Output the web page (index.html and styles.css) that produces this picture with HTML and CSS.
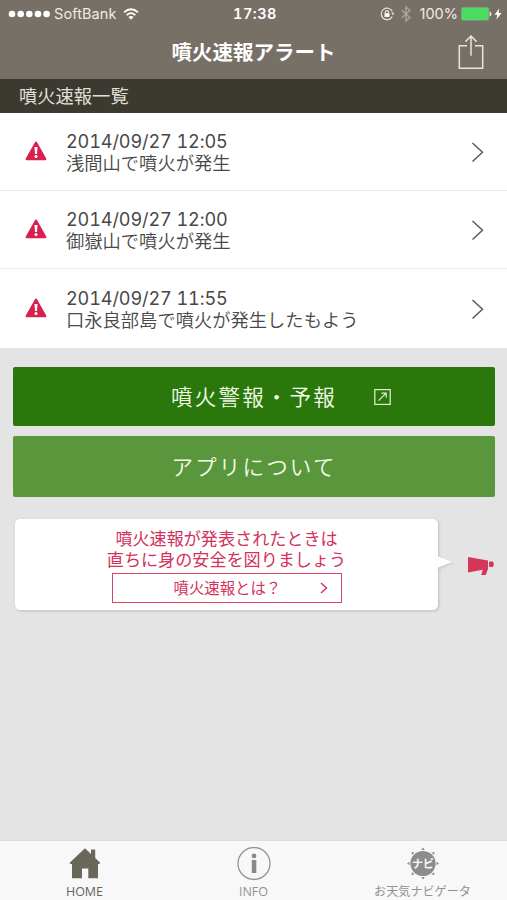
FILE: index.html
```html
<!DOCTYPE html>
<html lang="ja">
<head>
<meta charset="utf-8">
<title>噴火速報アラート</title>
<link rel="stylesheet" href="styles.css">
</head>
<body>
<div class="app">
  <header class="header">
    <div class="status">
      <div class="status-left">
        <svg width="42" height="10" viewBox="0 0 42 10" fill="#fff"><circle cx="4" cy="5" r="3.3"/><circle cx="12.7" cy="5" r="3.3"/><circle cx="21.3" cy="5" r="3.3"/><circle cx="30" cy="5" r="3.3"/><circle cx="38.6" cy="5" r="3.3"/></svg>
        <span class="carrier">SoftBank</span>
        <svg class="wifi" width="16" height="12" viewBox="0 0 16 12" fill="none" stroke="#fff" stroke-width="1.8"><path d="M1 4.4Q8-1.9 15 4.4M3.6 7.1Q8 3.2 12.4 7.1"/><path d="M5.4 9Q8 6.8 10.6 9L8 11.7Z" fill="#fff" stroke="none"/></svg>
      </div>
      <span class="clock">17:38</span>
      <div class="status-right">
        <svg width="15" height="14" viewBox="0 0 15 14" fill="none" stroke="#e9e6df" stroke-width="1.2"><path d="M12.3 4.4A5.8 5.8 0 1 0 12.3 9.4"/><path d="M11.3 5.8h3.2l-1.6 2.4z" fill="#e9e6df" stroke="none"/><rect x="4.5" y="6.2" width="5" height="3.7" fill="#fff" stroke="none"/><path d="M5.4 6.4V5.3a1.6 1.6 0 0 1 3.2 0v1.1"/></svg>
        <svg class="bluetooth" width="10" height="16" viewBox="0 0 10 16" fill="none" stroke="#aaa59c" stroke-width="1.4"><path d="M.8 4.2 9 11.5 5 15V1l4 3.5L.8 11.8"/></svg>
        <span class="percent">100%</span>
        <svg class="battery" width="31" height="14" viewBox="0 0 31 14"><rect x=".4" y=".5" width="27.4" height="12.8" rx="1.6" fill="#4cdc64" stroke="#8aa17e" stroke-width=".7"/><path d="M28.5 4.6q2 .3 2 2.4t-2 2.4z" fill="#e4e3dc"/></svg>
        <svg class="bolt" width="8" height="12" viewBox="0 0 8 12" fill="#fff"><path d="M5.3.5.5 6.8h2.8L2.4 11.5 7.5 5H4.6z"/></svg>
      </div>
    </div>
    <div class="titlebar">
      <h1>噴火速報アラート</h1>
      <svg class="share" width="26" height="36" viewBox="0 0 26 36" fill="none" stroke="#e9e5dc" stroke-width="1.5"><path d="M9 11.7H1.3V34.3h23.4V11.7H17M13 21.7V2.2M7.5 7.6 13 2l5.5 5.6"/></svg>
    </div>
  </header>

  <h2 class="section">噴火速報一覧</h2>

  <ul class="alerts">
    <li class="alert">
      <svg class="warn" viewBox="0 0 22 20"><path d="M11 1.8 20.2 18H1.8Z" fill="#d9204e" stroke="#d9204e" stroke-width="2.4" stroke-linejoin="round"/><path d="M9.5 6h3l-.5 7h-2z" fill="#fff"/><circle cx="11" cy="15.6" r="1.5" fill="#fff"/></svg>
      <div class="text"><time>2014/09/27 12:05</time><p>浅間山で噴火が発生</p></div>
      <svg class="arrow" viewBox="0 0 12 20"><path d="M1 1 11 10.2 1 19.4"/></svg>
    </li>
    <li class="alert">
      <svg class="warn" viewBox="0 0 22 20"><path d="M11 1.8 20.2 18H1.8Z" fill="#d9204e" stroke="#d9204e" stroke-width="2.4" stroke-linejoin="round"/><path d="M9.5 6h3l-.5 7h-2z" fill="#fff"/><circle cx="11" cy="15.6" r="1.5" fill="#fff"/></svg>
      <div class="text"><time>2014/09/27 12:00</time><p>御嶽山で噴火が発生</p></div>
      <svg class="arrow" viewBox="0 0 12 20"><path d="M1 1 11 10.2 1 19.4"/></svg>
    </li>
    <li class="alert">
      <svg class="warn" viewBox="0 0 22 20"><path d="M11 1.8 20.2 18H1.8Z" fill="#d9204e" stroke="#d9204e" stroke-width="2.4" stroke-linejoin="round"/><path d="M9.5 6h3l-.5 7h-2z" fill="#fff"/><circle cx="11" cy="15.6" r="1.5" fill="#fff"/></svg>
      <div class="text"><time>2014/09/27 11:55</time><p>口永良部島で噴火が発生したもよう</p></div>
      <svg class="arrow" viewBox="0 0 12 20"><path d="M1 1 11 10.2 1 19.4"/></svg>
    </li>
  </ul>

  <main class="content">
    <a class="button dark"><span>噴火警報・予報</span>
      <svg class="external" width="17" height="16" viewBox="0 0 17 16" fill="none" stroke="#e0f0d5" stroke-width="1.2"><rect x=".8" y=".6" width="15.4" height="14.8"/><path d="M4.6 11.6 12 4.2M7.5 4.1h4.7v4.7"/></svg>
    </a>
    <a class="button light"><span>アプリについて</span></a>
    <div class="notice">
      <div class="bubble">
        <p>噴火速報が発表されたときは<br>直ちに身の安全を図りましょう</p>
        <a class="more"><span>噴火速報とは？</span><svg width="8" height="12" viewBox="0 0 8 12" fill="none" stroke="#d9365a" stroke-width="1.5"><path d="M1 1 6.5 6 1 11"/></svg></a>
        <svg class="tail" width="15" height="14" viewBox="0 0 15 14"><path d="M0 1 15 7 0 13Z" fill="#fff"/></svg>
      </div>
      <svg class="horn" width="28" height="20" viewBox="0 0 28 20" fill="#d5365a"><path d="M1 1 21 4.6V12.7L18.8 19H14.2L15.8 13.7 1 16.5Z"/><path d="M22 5.8 25.5 5.3 27 8 26 11 22 10.8Z"/></svg>
    </div>
  </main>

  <nav class="tabs">
    <a class="tab active">
      <svg width="32" height="34" viewBox="0 0 32 34" fill="#69675a"><path d="M16 1.3 22 7V2.5h4.2V11l5 4.7-1 1.2H29V31.3H19.3V21.5H13V31.3H3V16.9H1.2L.7 15.8Z"/></svg>
      <span class="label">HOME</span>
    </a>
    <a class="tab">
      <svg width="36" height="34" viewBox="0 0 36 34"><circle cx="18" cy="16.5" r="16" fill="none" stroke="#929292" stroke-width="1.3"/><circle cx="18" cy="8.9" r="2.4" fill="#888"/><rect x="15.8" y="13" width="4.5" height="13" fill="#888"/></svg>
      <span class="label">INFO</span>
    </a>
    <a class="tab">
      <svg width="34" height="34" viewBox="0 0 34 34" fill="#8c8c8c"><circle cx="17" cy="16.5" r="12.6"/><path d="M15.2 3 17 .5 18.8 3ZM15.2 30 17 32.5 18.8 30ZM3.5 14.7 1 16.5 3.5 18.3ZM30.5 14.7 33 16.5 30.5 18.3ZM5.5 5l3 .5-2.5 2.5ZM28.5 5l-3 .5L28 8ZM5.5 28l3-.5L6 25ZM28.5 28l-3-.5L28 25Z"/><text class="badge" x="17" y="20.7" text-anchor="middle">ナビ</text></svg>
      <span class="label ja">お天気ナビゲータ</span>
    </a>
  </nav>
</div>
</body>
</html>
```
FILE: styles.css
```css
* { box-sizing: border-box; margin: 0; padding: 0; }
body { font-family: Inter, "Noto Sans CJK JP", sans-serif; color: #484848; background: #e4e4e4; }
svg { display: block; flex: none; }
.app { width: 507px; height: 900px; display: flex; flex-direction: column; overflow: hidden; }

.header { height: 79px; background: #777067; color: #fff; }
.status { height: 27px; display: grid; grid-template-columns: 1fr auto 1fr; align-items: center; padding: 0 5px 0 8px; font-size: 14.5px; line-height: 20px; }
.status-left, .status-right { display: flex; align-items: center; }
.status-right { justify-content: flex-end; }
.carrier { margin-left: 4px; letter-spacing: .1px; color: #eeebe5; }
.wifi { margin-left: 6px; }
.clock { font-weight: 600; font-size: 14.5px; letter-spacing: .5px; font-variant-numeric: tabular-nums; }
.bluetooth { margin-left: 6px; }
.percent { margin-left: 9px; color: #eeebe5; }
.battery { margin-left: 3px; }
.bolt { margin-left: 2px; }
.titlebar { height: 52px; display: grid; grid-template-columns: 1fr auto 1fr; align-items: center; padding-right: 23px; padding-left: 23px; }
.titlebar h1 { grid-column: 2; margin-bottom: 4px; font: bold 20.5px/30px "Noto Sans CJK JP", sans-serif; }
.share { justify-self: end; margin-bottom: 2px; }

.section { height: 34px; padding-left: 19px; background: #3c3931; color: #e2dfd8; font: 400 18.3px/32px "Noto Sans CJK JP", sans-serif; }

.alerts { list-style: none; background: #fff; }
.alert { height: 78px; display: flex; align-items: center; padding: 0 23px 0 25px; border-bottom: 1px solid #e9e9e9; }
.alert:last-child { height: 79px; border-bottom: 0; }
.warn { width: 22px; height: 20px; margin-bottom: 2px; }
.text { flex: 1; margin-left: 19px; }
.text time { display: block; font-size: 18.1px; line-height: 22px; letter-spacing: -.12px; font-variant-numeric: tabular-nums; }
.text p { font: 350 18.3px/21px "Noto Sans CJK JP", sans-serif; }
.arrow { width: 13px; height: 20px; fill: none; stroke: #555; stroke-width: 1.4; }

.content { flex: 1; padding: 19px 12px 0 13px; }
.button { display: grid; grid-template-columns: 1fr auto 1fr; align-items: center; border-radius: 2px; color: #f2fbe9; font: 350 21.6px/30px "Noto Sans CJK JP", sans-serif; letter-spacing: 2.1px; }
.button span { grid-column: 2; margin-bottom: 2px; }
.dark { height: 59px; background: #2a780b; }
.light { height: 61px; margin-top: 10px; background: #5a963b; }
.external { margin-left: 37px; margin-top: 1px; }
.notice { display: flex; align-items: center; margin-top: 22px; padding-left: 2px; }
.bubble { position: relative; width: 423px; height: 91px; background: #fff; border-radius: 5px; box-shadow: 1px 1px 3px #bcbcbc; padding-top: 8px; display: flex; flex-direction: column; align-items: center; color: #d3315b; }
.bubble p { font: 400 17.1px/21px "Noto Sans CJK JP", sans-serif; text-align: center; }
.more { width: 230px; height: 30px; margin-top: 4px; border: 1.5px solid #dc4565; display: flex; align-items: center; padding: 0 13px 0 61px; justify-content: space-between; font: 400 15.4px/26px "Noto Sans CJK JP", sans-serif; }
.more span { margin-bottom: 2px; }
.tail { position: absolute; left: 422px; top: 36px; filter: drop-shadow(1px 1px 1px #c6c6c6); }
.horn { margin-left: 29px; margin-top: 3px; }

.tabs { height: 60px; background: #f8f8f8; border-top: 1px solid #dedede; display: grid; grid-template-columns: repeat(3, 1fr); }
.tab { display: flex; flex-direction: column; align-items: center; padding-top: 6px; color: #929292; }
.active { color: #65635a; }
.label { margin-top: 3px; font: 400 12.5px/16px "Open Sans", sans-serif; }
.label.ja { margin-top: 2px; font: 400 12.1px/16px "Noto Sans CJK JP", sans-serif; }
.badge { font: bold 11px "Noto Sans CJK JP", sans-serif; fill: #f8f8f8; }
```
